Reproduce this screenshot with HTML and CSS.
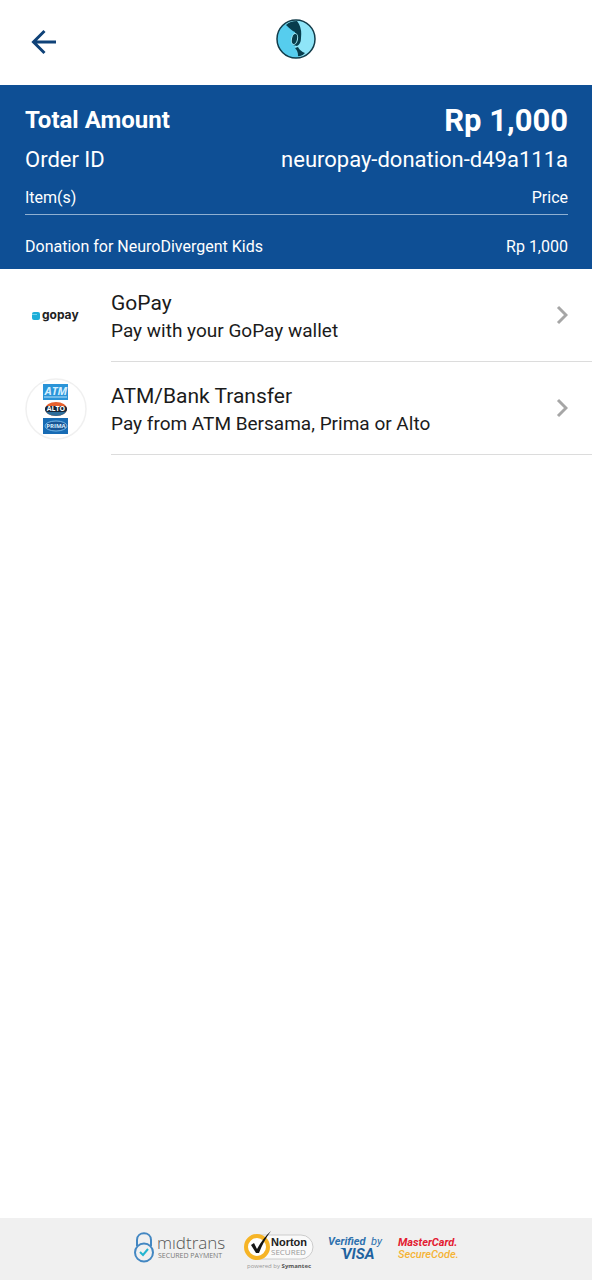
FILE: index.html
```html
<!DOCTYPE html>
<html lang="en">
<head>
<meta charset="utf-8">
<meta name="viewport" content="width=device-width, initial-scale=1">
<title>Payment</title>
<link rel="stylesheet" href="styles.css">
</head>
<body>
<div class="page">
  <header class="topbar">
    <button class="back" type="button" aria-label="Back">
      <svg width="26" height="26" viewBox="0 0 26 26" fill="none" stroke="#0f4278" stroke-width="3"><path d="M25 13H3M13.500 2L2.500 13l11 11" stroke-linejoin="miter"/></svg>
    </button>
    <svg class="brand" width="40" height="40" viewBox="0 0 40 40" role="img" aria-label="NeuroPay">
      <circle cx="20" cy="20" r="19" fill="#8fe5f8"/>
      <path d="M10 5C4 8 1 14 1 20c0 11 8 19 19 19l3-1-4-10 2-15z" fill="#56cdee"/>
      <path d="M10 6q4-4 11-4l2 3q3 6 2 14 0 6-4 8l-4-1q4-5 2-13-3-1-9-7z" fill="#073d4d"/>
      <ellipse cx="18.500" cy="20" rx="3" ry="5.500" transform="rotate(12 18.500 20)" fill="#073d4d" stroke="#a4e9f5"/>
      <path d="M19 29l3-1q2 4 7 6-3 4-7 3 0-5-3-8z" fill="#073d4d"/>
      <circle cx="20" cy="20" r="19" fill="none" stroke="#123c4a" stroke-width="1.500"/>
    </svg>
  </header>

  <main class="content">
    <section class="summary">
      <div class="line total"><h1 class="total-label">Total Amount</h1><strong class="total-value">Rp 1,000</strong></div>
      <div class="line order"><span>Order ID</span><span>neuropay-donation-d49a111a</span></div>
      <table class="items">
        <thead><tr><th scope="col">Item(s)</th><th scope="col" class="price">Price</th></tr></thead>
        <tbody><tr><td>Donation for NeuroDivergent Kids</td><td class="price">Rp 1,000</td></tr></tbody>
      </table>
    </section>

    <nav class="methods" aria-label="Payment methods">
      <a class="method" href="#gopay">
        <svg class="method-logo" width="62" height="62" viewBox="0 0 62 62" aria-hidden="true">
          <path d="M7 29q0-2 2-2h4q2 0 2 2v4q0 2-2 2H9q-2 0-2-2z" fill="#1daed8"/>
          <path d="M7 29.500h5" stroke="#73d4ed"/>
          <text class="gopay-word" x="17" y="34">gopay</text>
        </svg>
        <span class="method-body">
          <span class="method-text"><span class="method-name">GoPay</span><span class="method-note">Pay with your GoPay wallet</span></span>
          <svg class="chevron" width="12" height="20" viewBox="0 0 12 20"><path d="M2 2l8 8-8 8"/></svg>
        </span>
      </a>
      <a class="method" href="#bank-transfer">
        <svg class="method-logo" width="62" height="62" viewBox="0 0 62 62" aria-hidden="true">
          <circle cx="31" cy="31" r="30" fill="#fff" stroke="#f0f0f0" stroke-width="1.500"/>
          <path fill="#2a94d8" d="M18 6h25v16H18z"/>
          <text class="atm-word" x="31" y="17">ATM</text>
          <path d="M19 19h23" stroke="#b9e3fa"/>
          <ellipse cx="31" cy="31" rx="11" ry="7" fill="#e7602d"/>
          <path d="M20 31h22q-1 7-11 7t-11-7z" fill="#2c6c9a"/>
          <rect x="20" y="28" width="22" height="6" rx="3" fill="#152638"/>
          <text class="alto-word" x="31" y="33">ALTO</text>
          <path fill="#176bb4" d="M18 40h25v16H18z"/>
          <ellipse cx="31" cy="48" rx="11" ry="5" fill="#185494" stroke="#73b7e7"/>
          <text class="prima-word" x="31" y="50">PRIMA</text>
        </svg>
        <span class="method-body">
          <span class="method-text"><span class="method-name">ATM/Bank Transfer</span><span class="method-note">Pay from ATM Bersama, Prima or Alto</span></span>
          <svg class="chevron" width="12" height="20" viewBox="0 0 12 20"><path d="M2 2l8 8-8 8"/></svg>
        </span>
      </a>
    </nav>
  </main>

  <footer class="trust">
    <svg width="96" height="40" viewBox="0 0 96 40" role="img" aria-label="Midtrans secured payment">
      <g fill="none" stroke="#4387c2" stroke-width="2"><path d="M4 16v-6c0-9 14-9 14 0v6"/><circle cx="11" cy="22.500" r="9"/></g>
      <path d="M7 22l3 3 5-6" fill="none" stroke="#22b5d0" stroke-width="2"/>
      <text class="midtrans-word" x="24" y="19">mıdtrans</text>
      <text class="midtrans-note" x="25" y="28">SECURED PAYMENT</text>
    </svg>
    <svg width="69" height="40" viewBox="0 0 69 40" role="img" aria-label="Norton secured, powered by Symantec">
      <path d="M12 5h45a12 12 0 0 1 0 24H12z" fill="#fafafa" stroke="#ccc"/>
      <circle cx="13" cy="17" r="11" fill="#fff" stroke="#f6b426" stroke-width="4"/>
      <path d="M7 15l3-2 3 6q6-11 14-18-7 9-12 22h-3z" fill="#151515"/>
      <text class="norton-word" x="27" y="16">Norton</text>
      <text class="norton-note" x="27" y="25">SECURED</text>
      <text class="powered" x="3" y="38">powered by <tspan class="symantec">Symantec</tspan></text>
    </svg>
    <svg width="55" height="40" viewBox="0 0 55 40" role="img" aria-label="Verified by Visa">
      <text class="verified" x="0" y="15">Verified</text>
      <text class="verified-by" x="43" y="15">by</text>
      <text class="visa" x="14" y="29">VISA</text>
      <path d="M12 18h5l1 3z" fill="#1f629f"/>
    </svg>
    <svg width="62" height="40" viewBox="0 0 62 40" role="img" aria-label="MasterCard SecureCode">
      <text class="mastercard" x="0" y="16">MasterCard.</text>
      <text class="securecode" x="0" y="28">SecureCode.</text>
    </svg>
  </footer>
</div>
</body>
</html>
```
FILE: styles.css
```css
* { box-sizing: border-box; }
body { margin: 0; background: #fff; color: #1b1b1b; font-family: Roboto, sans-serif; }
.page { min-height: 100vh; display: flex; flex-direction: column; }

.topbar {
  display: grid;
  grid-template-columns: 1fr auto 1fr;
  align-items: start;
  height: 85px;
  padding: 19px 24px 0;
}
.back { justify-self: start; display: flex; margin: 3px 0 0; padding: 7px; border: 0; background: none; cursor: pointer; }
.brand { display: block; }

.content { flex: 1; }
.summary { padding: 16px 24px 0 25px; background: #0e4f95; color: #fff; }
.line { display: flex; justify-content: space-between; align-items: center; }
.total { height: 38px; }
.total-label { margin: 0; font-size: 24px; font-weight: 700; }
.total-value { font-size: 31px; font-weight: 700; }
.order { height: 40px; font-size: 22px; }
.items { width: 100%; border-collapse: separate; border-spacing: 0; font-size: 16px; line-height: 20px; }
.items th { padding: 9px 0 6px; font-weight: 400; text-align: left; border-bottom: 1px solid #8fb0d2; }
.items td { padding: 22px 0 12px; }
.items .price { text-align: right; }

.method { display: flex; color: inherit; text-decoration: none; }
.method-logo { flex: none; margin: 16px 24px 0 25px; }
.method-body {
  flex: 1;
  display: flex;
  justify-content: space-between;
  align-items: center;
  padding: 16px 24px 16px 0;
  border-bottom: 1px solid #dcdcdc;
}
.method-text { display: flex; flex-direction: column; padding-top: 4px; line-height: 28px; }
.method-name { font-size: 21px; }
.method-note { font-size: 19px; }
.chevron { flex: none; fill: none; stroke: #a6a6a6; stroke-width: 3; }

.trust { display: flex; justify-content: center; gap: 15px; padding: 12px 0 10px; background: #f0f0f0; }
.trust svg { flex: none; overflow: visible; }

.gopay-word { font: 700 12px Inter, sans-serif; fill: #222; }
.atm-word { font: italic 700 11px "Open Sans", sans-serif; fill: #d5efff; text-anchor: middle; }
.alto-word { font: 700 7px "Open Sans", sans-serif; fill: #fff; text-anchor: middle; }
.prima-word { font: 700 6px "Open Sans", sans-serif; fill: #d8efff; text-anchor: middle; }
.midtrans-word { font: 300 17px "Open Sans", sans-serif; fill: #555; }
.midtrans-note { font: 400 7px "Open Sans", sans-serif; fill: #777; }
.norton-word { font: 700 11px "Liberation Sans", sans-serif; fill: #222; }
.norton-note { font: 400 8px "Open Sans", sans-serif; fill: #999; }
.powered { font: 400 6px "Open Sans", sans-serif; fill: #999; }
.symantec { font-weight: 700; fill: #555; }
.verified { font: italic 700 11px Roboto, sans-serif; fill: #2d70ae; }
.verified-by { font: italic 400 11px Roboto, sans-serif; fill: #2d70ae; }
.visa { font: italic 700 15px Roboto, sans-serif; fill: #1f629f; }
.mastercard { font: italic 700 11px Roboto, sans-serif; fill: #e31b32; }
.securecode { font: italic 500 11px Roboto, sans-serif; fill: #f5b335; }
```
